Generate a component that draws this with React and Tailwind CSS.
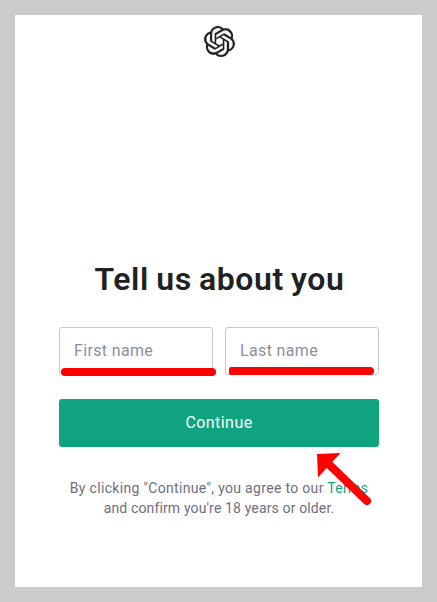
import React, { useState } from 'react';
import { SiOpenai } from 'react-icons/si';

const NameField = ({ label, value, onChange, children }) => (
  <div className="relative w-[154px]">
    <input
      type="text"
      aria-label={label}
      placeholder={label}
      value={value}
      onChange={(e) => onChange(e.target.value)}
      className="block h-12 w-full rounded-[3px] border border-[#c2c8d0] bg-white pr-3 pb-0.5 pl-[14.5px] text-base tracking-[0.35px] text-[#202123] outline-none placeholder:text-[#8e8ea0]"
    />
    {children}
  </div>
);

const App = () => {
  const [firstName, setFirstName] = useState('');
  const [lastName, setLastName] = useState('');

  return (
    <div className="h-[602px] w-[437px] bg-[#cbcbcb] pt-[15px] pl-[15px] font-[Roboto,sans-serif]">
      <main className="relative flex h-[572px] w-[407px] flex-col items-center bg-white pt-2.5">
        <div className="flex h-8 w-8 shrink-0 items-center justify-center pl-px">
          <SiOpenai size={31} strokeWidth={0.15} className="shrink-0 overflow-visible text-[#202123]" />
        </div>

        <h1 className="mt-[202px] pl-0.5 whitespace-nowrap text-[32px] leading-10 font-semibold tracking-[0.6px] [word-spacing:-1.3px] text-[#202123]">
          Tell us about you
        </h1>

        <form className="mt-7 w-80" onSubmit={(e) => e.preventDefault()}>
          <div className="flex gap-3">
            <NameField label="First name" value={firstName} onChange={setFirstName}>
              <span className="absolute top-[41px] left-0.5 h-2 w-[155px] rounded-full bg-[#fe0000]" />
            </NameField>
            <NameField label="Last name" value={lastName} onChange={setLastName}>
              <span className="absolute top-10 left-1 h-2 w-[145px] rounded-l-[2px] rounded-r-[4px] bg-[#fe0000]" />
            </NameField>
          </div>

          <button
            type="submit"
            className="mt-6 block h-12 w-full rounded-[3px] bg-[#10a37f] pl-px text-base tracking-[0.45px] text-white"
          >
            Continue
          </button>
        </form>

        <p className="mt-[31px] pl-px text-center text-sm leading-5 whitespace-nowrap text-[#6e6e80]">
          <span className="tracking-[0.32px]">
            By clicking "Continue", you agree to our <a href="#terms" className="text-[#10a37f]">Terms</a>
          </span>
          <br />
          <span className="tracking-[0.14px]">and confirm you're 18 years or older.</span>
        </p>

        {/* Arrow pointing at the continue button */}
        <svg className="absolute top-[437px] left-[300px]" width="58" height="56" viewBox="0 0 58 56" fill="none">
          <path d="M2 2L25.5 1L3 25.5Z" fill="#fe0000" />
          <path d="M12 10.5L52 49" stroke="#fe0000" strokeWidth="8" strokeLinecap="round" />
        </svg>
      </main>
    </div>
  );
};

export default App;
